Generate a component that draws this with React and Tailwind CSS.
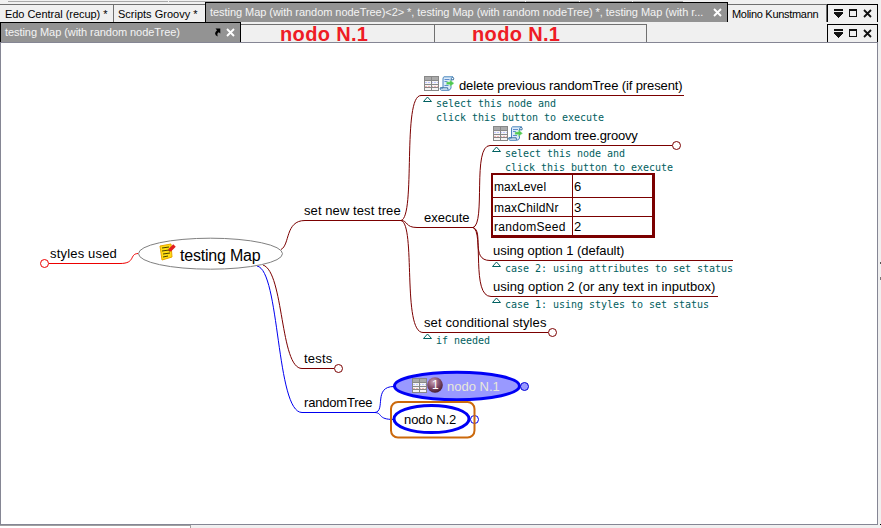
import React from "react";

function Label({ className, children }) {
  return <div className={"absolute whitespace-pre leading-[14px] " + className}>{children}</div>;
}

const nodeText = "text-[13px] text-black ";
const noteText = "font-['DejaVu_Sans_Mono',monospace] text-[10px] tracking-[-0.02px] text-[#006060] ";

function Controls() {
  return (
    <svg className="h-[18px] w-[51px] shrink-0 bg-[#f0f0f0]" viewBox="0 0 51 18" shapeRendering="crispEdges">
      <path d="M.5 18V.5H50.5V18" fill="none" stroke="#000" />
      <path d="M7 5h9v2H7zM7 8h9v2H7zM8 10h7v1H8zM9 11h5v1H9zM10 12h3v1h-3zM11 13h1v1h-1z" fill="#111" />
      <path d="M22 5h8v8h-8zM23 7v5h6V7z" fill="#111" fillRule="evenodd" />
      <path d="M37 6l7 7M44 6l-7 7" stroke="#111" strokeWidth="1.8" shapeRendering="auto" />
    </svg>
  );
}

function Close() {
  return (
    <svg className="h-[9px] w-[9px] shrink-0" viewBox="0 0 9 9">
      <path d="M1 1l7 7M8 1L1 8" stroke="#fff" strokeWidth="1.9" />
    </svg>
  );
}

function TopBar() {
  return (
    <div className="flex h-[20px] items-end text-[11px]">
      <div className="flex h-[18px] w-[114px] shrink-0 items-center border-t border-r border-[#707070] pt-px pl-[5px] whitespace-pre tracking-[-0.04px]">Edo Central (recup) *</div>
      <div className="flex h-[18px] w-[91px] shrink-0 items-center border-t border-[#707070] pt-px pl-[4px] whitespace-pre">Scripts Groovy *</div>
      <div className="flex h-[20px] w-[523px] shrink-0 items-center border-t border-r border-l border-black bg-[#939393] pl-[4px] text-[#f4f4f4]">
        <span className="w-[503px] whitespace-pre tracking-[-0.048px]">testing Map (with random nodeTree)&lt;2&gt; *, testing Map (with random nodeTree) *, testing Map (with r...</span>
        <Close />
      </div>
      <div className="flex h-[18px] w-[99px] shrink-0 items-center border-t border-r border-[#707070] pt-px pl-[4px] whitespace-pre tracking-[-0.3px]">Molino Kunstmann</div>
      <Controls />
    </div>
  );
}

function SecondBar() {
  return (
    <div className="flex h-[20px] items-end text-[11px]">
      <div className="flex h-[20px] w-[241px] shrink-0 items-center border-t border-r border-l border-black bg-[#939393] pl-[4px] text-[#f4f4f4]">
        <span className="w-[209px] whitespace-pre tracking-[-0.06px]">testing Map (with random nodeTree)</span>
        <svg className="mr-[5px] h-[9px] w-[7px]" viewBox="0 0 7 9">
          <path d="M1.500 .5H6.300v5L4.800 4.200Q2.500 5 3.800 8.500Q-1.200 6 3 2.300z" fill="#000" />
        </svg>
        <Close />
      </div>
      <div className="flex h-[18px] w-[194px] shrink-0 items-center border-t border-r border-[#707070] pl-[39px] text-[20px] leading-[18px] font-bold whitespace-pre text-[#ee1c25] tracking-[0.35px]">nodo N.1</div>
      <div className="flex h-[18px] w-[212px] shrink-0 items-center border-t border-r border-[#707070] pl-[37px] text-[20px] leading-[18px] font-bold whitespace-pre text-[#ee1c25] tracking-[0.35px]">nodo N.1</div>
      <div className="w-[180px] shrink-0" />
      <Controls />
    </div>
  );
}

function TableIcon({ x, y }) {
  return (
    <g transform={`translate(${x} ${y})`} shapeRendering="crispEdges">
      <path d="M0 0h15v15H0z" fill="#f5f5f5" />
      <path d="M0 0h15v4H0z" fill="#aaa" />
      <path d="M1 6h13" stroke="#bfc4ff" strokeDasharray="2 1" />
      <path d="M1 10h13" stroke="#f2b6b6" strokeDasharray="2 1" />
      <path d="M.5.5h14v14H.5zM0 4.5h15M0 8.5h15M0 11.5h15M7.5 0v15" fill="none" stroke="#888" />
    </g>
  );
}

function ScriptIcon({ x, y }) {
  return (
    <g transform={`translate(${x} ${y})`}>
      <path d="M4.500 .8H13.500Q11.300 1.500 11.500 4V12Q11 14.300 8.500 14.300H2Q.4 14 .6 12H3.500V3Q3.400 1.200 4.500 .8z" fill="#dcebfa" stroke="#4b86bb" />
      <path d="M13.200 1Q14.800 2 14 3.800H11.500M.8 11.800H8.200Q8 14 9 14" fill="none" stroke="#39709f" />
      <path d="M5 3.500h5M5 5.500h3M5 9.500h4" stroke="#5c8dce" />
      <path d="M7 6h3.500V4L14.500 7.300L10.500 10.500V8.500H7z" fill="#50c850" stroke="#a5e6a5" strokeWidth=".5" />
    </g>
  );
}

function NotePointer({ x, y }) {
  return <path d={`M${x} ${y + 4.5}h8l-4 -4.5z`} fill="none" stroke="#006060" />;
}

function Drawing() {
  return (
    <svg className="absolute top-0 left-0 h-[528px] w-[881px]" viewBox="0 0 881 528" fill="none">
      <defs>
        <radialGradient id="ball" cx=".4" cy=".3" r=".75">
          <stop offset="0" stopColor="#c8a3b6" />
          <stop offset=".5" stopColor="#84506c" />
          <stop offset="1" stopColor="#40182c" />
        </radialGradient>
      </defs>
      <g stroke="#7b0000">
        <path d="M281 249.5C290 245 285 220.5 305 220.5H401" />
        <path d="M263 265C284 272 280 368.5 302 368.5H334" />
        <path d="M401 220.5C416 217 402 95.5 421 95.5H684" />
        <path d="M401 220.5C408 220.5 405 227.5 417 227.5H473" />
        <path d="M401 220.5C416 224 402 332.5 423 332.5H548" />
        <path d="M473 227.5C486 224 472 145.5 490 145.5H672" />
        <path d="M473 227.5C484 231 470 260.5 490 260.5H733" />
        <path d="M473 227.5C484 231 471 296.5 491 296.5H718" />
        <circle cx="338.5" cy="368.5" r="4" fill="#fff" />
        <circle cx="676.5" cy="145.5" r="4" fill="#fff" />
        <circle cx="552.5" cy="332.5" r="4" fill="#fff" />
      </g>
      <g stroke="#ed0000">
        <path d="M138 253.5C129 254 136 263.5 120 263.5H49" />
        <circle cx="44.5" cy="263.5" r="4" fill="#fff" />
      </g>
      <g stroke="#0000f0">
        <path d="M257 266C280 270 276 412.5 302 412.5H375" />
        <path d="M375 412.5C386 411 373 386.5 394 386.5" />
        <path d="M375 412.5C383 413 377 419.5 394 419.5" />
      </g>
      <ellipse cx="210.5" cy="253.7" rx="72" ry="15.5" fill="#fff" stroke="#808080" />
      <ellipse cx="457" cy="386" rx="62.5" ry="13.7" fill="#9999ff" stroke="#0000f5" strokeWidth="3" />
      <circle cx="524.5" cy="386.5" r="4" fill="#9999ff" stroke="#0000d8" />
      <circle cx="474.5" cy="419.5" r="4" fill="#fff" stroke="#0000f0" />
      <rect x="391" y="402" width="83.5" height="35.5" rx="7" stroke="#cb690c" strokeWidth="2" />
      <ellipse cx="431.5" cy="419" rx="37.5" ry="13.5" fill="#fff" stroke="#0000f5" strokeWidth="3" />
      <NotePointer x={423.5} y={97} />
      <NotePointer x={492.5} y={147} />
      <NotePointer x={492.5} y={262} />
      <NotePointer x={492.5} y={298} />
      <NotePointer x={423.5} y={334} />
      <TableIcon x={424} y={76} />
      <ScriptIcon x={439.5} y={76} />
      <TableIcon x={493} y={126} />
      <ScriptIcon x={508} y={126} />
      <TableIcon x={412} y={378} />
      <circle cx="435" cy="385" r="7.8" fill="url(#ball)" />
      <g>
        <path d="M160 246l11-2 1 13-10 3z" fill="#ffdc13" stroke="#e7a500" />
        <path d="M162 248l7-1M162 251l7-1M163 254l7-1M163 257l5-1" stroke="#4a4000" />
        <path d="M169 251l4-4" stroke="#7a2a10" strokeWidth="2" />
        <path d="M169.500 250.500l5-5" stroke="#e02020" strokeWidth="3.500" />
      </g>
    </svg>
  );
}

function AttributeTable() {
  return (
    <div className="absolute top-[173px] left-[491px] grid h-[65px] w-[164px] grid-cols-[80px_1fr] grid-rows-[23px_19px_1fr] border-2 border-r-[3px] border-b-[3px] border-[#7b0000] bg-white text-[12px] leading-[14px]">
      <div className="flex items-center border-r border-b border-[#7b0000] pt-px pl-[1px] tracking-[0.1px]">maxLevel</div>
      <div className="flex items-center border-b border-[#7b0000] pt-px pl-[1px] text-[13px]">6</div>
      <div className="flex items-center border-r border-b border-[#7b0000] pt-px pl-[1px] tracking-[0.2px]">maxChildNr</div>
      <div className="flex items-center border-b border-[#7b0000] pt-px pl-[1px] text-[13px]">3</div>
      <div className="flex items-center border-r border-[#7b0000] pt-px pl-px tracking-[0.3px]">randomSeed</div>
      <div className="flex items-center pt-px pl-[1px] text-[13px]">2</div>
    </div>
  );
}

export default function App() {
  return (
    <div className="flex h-[528px] w-[881px] flex-col overflow-hidden bg-[#f0f0f0] font-['Liberation_Sans',Arial,sans-serif]">
      <div className="flex h-[2px] shrink-0 items-end gap-px pl-[8px]">
        <div className="h-px w-[160px] bg-[#a8a8a8]" />
        <div className="h-px w-[356px] bg-[#a8a8a8]" />
        <div className="h-px w-[53px] bg-[#a8a8a8]" />
        <div className="h-px w-[52px] bg-[#a8a8a8]" />
        <div className="h-px w-[50px] bg-[#a8a8a8]" />
      </div>
      <TopBar />
      <SecondBar />
      <div className="flex h-[483px] shrink-0">
        <div className="relative h-[483px] w-[878px] border border-[#858694] bg-white">
          <div className="absolute -top-[43px] -left-px h-[528px] w-[881px]">
            <Drawing />
            <Label className={nodeText + "top-[247px] left-[50px] tracking-[0.18px]"}>styles used</Label>
            <Label className="top-[249px] left-[180px] text-[16px] tracking-[-0.2px] text-black">testing Map</Label>
            <Label className={nodeText + "top-[204px] left-[304px] tracking-[0.08px]"}>set new test tree</Label>
            <Label className={nodeText + "top-[352px] left-[304px] tracking-[0.2px]"}>tests</Label>
            <Label className={nodeText + "top-[396px] left-[304px] tracking-[-0.2px]"}>randomTree</Label>
            <Label className={nodeText + "top-[79px] left-[459px] tracking-[-0.11px]"}>delete previous randomTree (if present)</Label>
            <Label className={noteText + "top-[97px] left-[436px]"}>{"select this node and\nclick this button to execute"}</Label>
            <Label className={nodeText + "top-[129px] left-[528px] tracking-[-0.17px]"}>random tree.groovy</Label>
            <Label className={noteText + "top-[147px] left-[505px]"}>{"select this node and\nclick this button to execute"}</Label>
            <AttributeTable />
            <Label className={nodeText + "top-[211px] left-[424px]"}>execute</Label>
            <Label className={nodeText + "top-[244px] left-[493px] tracking-[-0.04px]"}>using option 1 (default)</Label>
            <Label className={noteText + "top-[262px] left-[505px]"}>case 2: using attributes to set status</Label>
            <Label className={nodeText + "top-[280px] left-[493px] tracking-[0.05px]"}>using option 2 (or any text in inputbox)</Label>
            <Label className={noteText + "top-[298px] left-[505px]"}>case 1: using styles to set status</Label>
            <Label className={nodeText + "top-[316px] left-[424px] tracking-[0.12px]"}>set conditional styles</Label>
            <Label className={noteText + "top-[334px] left-[436px]"}>if needed</Label>
            <Label className="top-[378px] left-[432px] text-[12px] text-white">1</Label>
            <Label className="top-[380px] left-[447px] text-[13px] text-[#e8e8d8]">nodo N.1</Label>
            <Label className={nodeText + "top-[413px] left-[404px] tracking-[-0.08px]"}>nodo N.2</Label>
          </div>
        </div>
        <div className="flex w-[3px] flex-col items-end pt-[220px]">
          <div className="h-[3px] w-px bg-[#555]" />
          <div className="mt-[13px] h-[5px] w-px bg-[#777]" />
          <div className="mt-[244px] h-px w-px bg-black" />
        </div>
      </div>
      <div className="h-[3px] w-[191px] shrink-0 border-t border-r border-[#a0a0a0] bg-white" />
    </div>
  );
}
